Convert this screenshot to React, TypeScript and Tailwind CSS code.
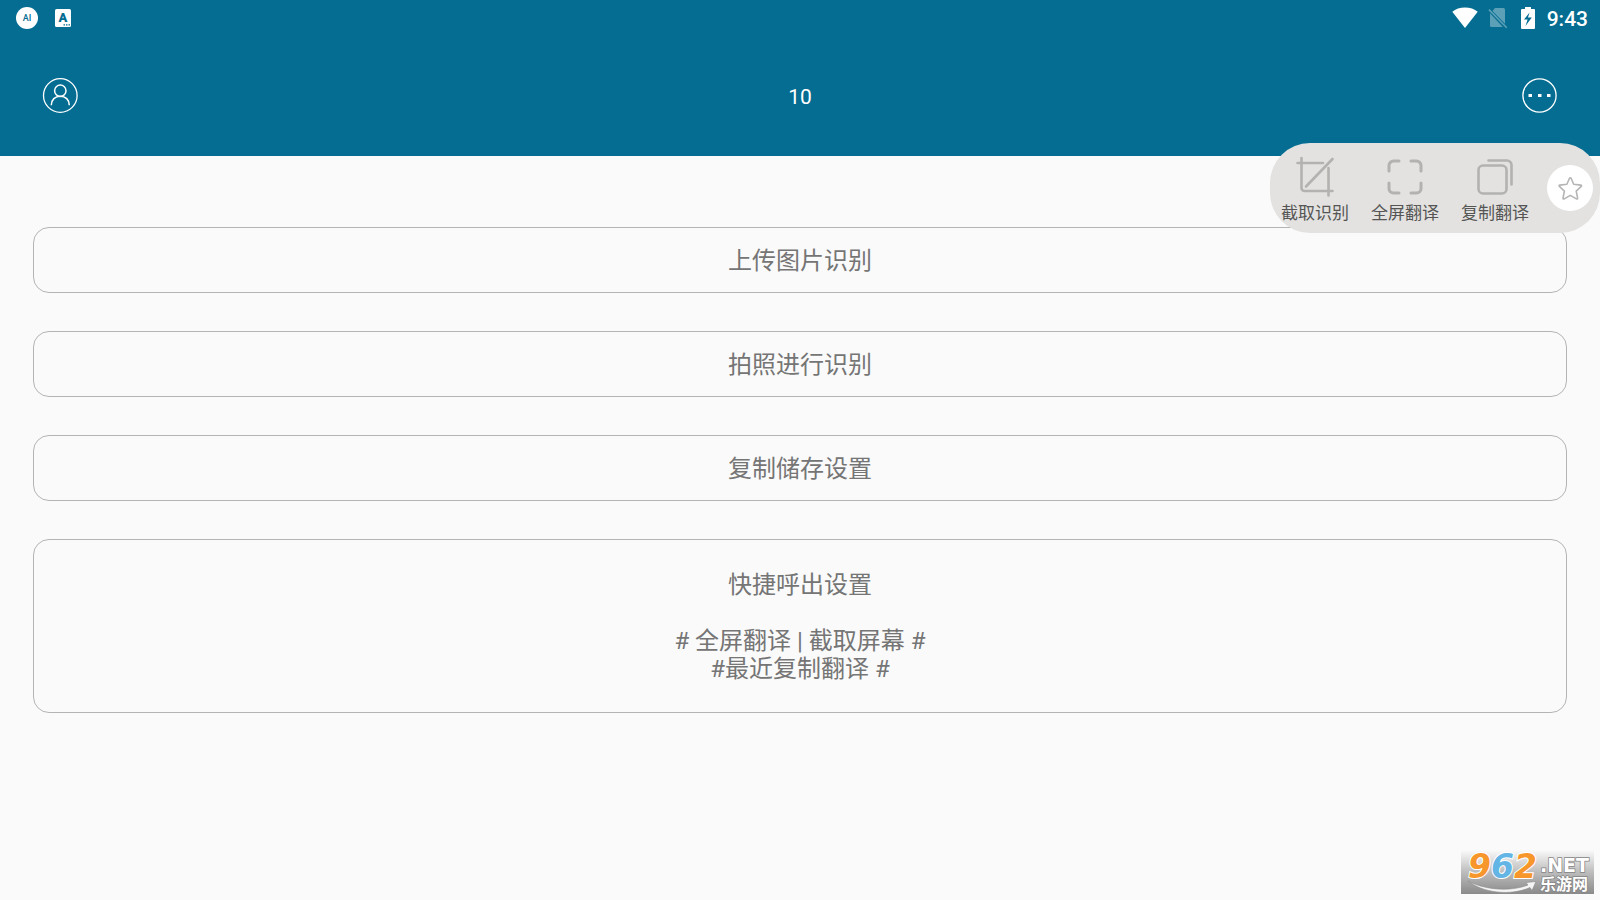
import React from 'react';

const menuButtons = [
  { id: 'upload', label: '上传图片识别' },
  { id: 'photo', label: '拍照进行识别' },
  { id: 'storage', label: '复制储存设置' },
];

const floatingTools = [
  { id: 'crop', label: '截取识别', icon: CropIcon },
  { id: 'fullscreen', label: '全屏翻译', icon: FullscreenIcon },
  { id: 'copy', label: '复制翻译', icon: CopyIcon },
];

export default function App() {
  return (
    <div className="relative min-h-screen bg-[#fafafa] font-[Roboto,'Noto_Sans_CJK_SC',sans-serif] text-[#757575]">
      <header className="bg-[#056d92] text-white">
        <StatusBar />
        <div className="grid h-[120px] grid-cols-[1fr_auto_1fr] items-center px-[42px]">
          <button className="justify-self-start" aria-label="Account">
            <UserIcon />
          </button>
          <h1 className="pt-0.5 text-[21px] leading-6">10</h1>
          <button className="justify-self-end" aria-label="More">
            <MoreIcon />
          </button>
        </div>
      </header>

      <main className="flex flex-col gap-[38px] px-[33px] pt-[71px]">
        {menuButtons.map((b) => (
          <button
            key={b.id}
            className="h-[66px] w-full rounded-2xl border border-[#b4b4b4] pt-0.5 text-2xl leading-7"
          >
            {b.label}
          </button>
        ))}
        <button className="w-full rounded-2xl border border-[#b4b4b4] pt-[31px] pb-[29px] text-2xl leading-7">
          <span className="mb-7 block">快捷呼出设置</span>
          <span className="block"># 全屏翻译 | 截取屏幕 #</span>
          <span className="block">#最近复制翻译 #</span>
        </button>
      </main>

      {/* Floating tools */}
      <div className="absolute top-[143px] right-0 flex h-[90px] rounded-[40px] bg-[#e3e2e0]">
        {floatingTools.map((t) => {
          const Icon = t.icon;
          return (
            <button key={t.id} className="flex w-[90px] flex-col items-center pt-3 text-[#555]">
              <Icon />
              <span className="mt-1.5 text-[17px] leading-5">{t.label}</span>
            </button>
          );
        })}
        <div className="flex w-[60px] items-center justify-center">
          <button
            className="flex h-[46px] w-[46px] items-center justify-center rounded-full bg-white"
            aria-label="Favorite"
          >
            <StarIcon />
          </button>
        </div>
      </div>

      <Watermark />
    </div>
  );
}

function StatusBar() {
  return (
    <div className="flex h-9 items-center justify-between pr-3 pl-4">
      <div className="flex items-center gap-4">
        <svg width="22" height="22" viewBox="0 0 22 22">
          <circle cx="11" cy="11" r="11" fill="#fff" />
          <text x="11" y="14" textAnchor="middle" fontSize="9" fill="#056d92" className="font-[Roboto] font-medium">
            AI
          </text>
        </svg>
        <svg width="18" height="18" viewBox="0 0 18 18">
          <rect x="1" width="16" height="18" rx="1.5" fill="#fff" />
          <text x="9" y="13" textAnchor="middle" fontSize="13" fill="#056d92" className="font-[Roboto] font-black">
            A
          </text>
          <path d="M9.500 15.800h1.500M12 15.800h1.500M14.500 15.800h1.500" stroke="#056d92" strokeWidth="1.200" />
        </svg>
      </div>
      <div className="flex items-center">
        <svg width="26" height="22" viewBox="0 0 26 22">
          <path d="M13 21 0.300 4.700C3.500 2.100 8 .5 13 .5s9.500 1.600 12.700 4.200z" fill="#fff" />
        </svg>
        <svg className="ml-2.5" width="20" height="22" viewBox="0 0 20 22" opacity="0.35" fill="#fff">
          <path d="M7 1h8.500A1.500 1.500 0 0 1 17 2.500v14.300L4.500 4z" />
          <path d="M2 6.300 14.800 20H3.500A1.500 1.500 0 0 1 2 18.500z" />
          <path d="M.4 3.200 1.500 2.100 19.300 20.200 18.200 21.300z" />
        </svg>
        <svg className="ml-3" width="16" height="22" viewBox="0 0 16 22">
          <path d="M5 0h6v2h3a1 1 0 0 1 1 1v18a1 1 0 0 1-1 1H2a1 1 0 0 1-1-1V3a1 1 0 0 1 1-1h3z" fill="#fff" />
          <path d="M9.500 5.500 4 12.500h3.600L5.500 19l6.300-8.500H8z" fill="#056d92" />
        </svg>
        <span className="ml-[11px] pt-px text-[21px] leading-6 font-medium">9:43</span>
      </div>
    </div>
  );
}

function UserIcon() {
  return (
    <svg width="36" height="36" viewBox="0 0 36 36" fill="none" stroke="#fff" strokeWidth="1.500">
      <circle cx="18.300" cy="17.500" r="16.800" strokeWidth="1.300" />
      <circle cx="18.300" cy="12.700" r="5.700" />
      <path d="M9.300 27.200c0-5.500 3.800-9 9-9s9 3.500 9 9" />
    </svg>
  );
}

function MoreIcon() {
  return (
    <svg width="36" height="36" viewBox="0 0 36 36" fill="none" stroke="#fff">
      <circle cx="17.500" cy="17.500" r="16.600" strokeWidth="1.300" />
      <path d="M6.500 17.500h3.500M16 17.500h3.500M25 17.500h3.500" strokeWidth="3" />
    </svg>
  );
}

function CropIcon() {
  return (
    <svg width="40" height="42" viewBox="0 0 40 42" fill="none" stroke="#b3b2b0" strokeWidth="2.600" strokeLinecap="round">
      <path d="M2.500 8H28M6.500 3v30a3 3 0 0 0 3 3H37.500" />
      <path d="M33.500 13V40.500M37.500 4 11 31.500" />
    </svg>
  );
}

function FullscreenIcon() {
  return (
    <svg width="40" height="42" viewBox="0 0 40 42" fill="none" stroke="#b3b2b0" strokeWidth="3" strokeLinecap="round">
      <path d="M4 16V10.500A4.500 4.500 0 0 1 8.500 6H14M26 6h5.500A4.500 4.500 0 0 1 36 10.500V16" />
      <path d="M36 28v5.500a4.500 4.500 0 0 1-4.500 4.500H26M14 38H8.500A4.500 4.500 0 0 1 4 33.500V28" />
    </svg>
  );
}

function CopyIcon() {
  return (
    <svg width="40" height="42" viewBox="0 0 40 42" fill="none" stroke="#b3b2b0" strokeWidth="2.600" strokeLinecap="round">
      <rect x="3.500" y="10.500" width="28" height="28" rx="4.500" />
      <path d="M13.500 5.500H32a4.500 4.500 0 0 1 4.500 4.500V29.500" />
    </svg>
  );
}

function StarIcon() {
  return (
    <svg width="28" height="28" viewBox="0 0 28 28" fill="none" stroke="#b5b5b5" strokeWidth="1.600" strokeLinejoin="round">
      <path d="M14.300 3.700q.5 0 .8.600l2.600 6 7 .8q1.400.3.500 1.300l-5 4.700 1.400 6.900q.1 1.400-1.200.9L14.300 21.400l-6.100 3.500q-1.300.5-1.200-.9l1.400-6.900-5-4.700q-.9-1 .5-1.300l7-.8 2.600-6q.3-.6.8-.6z" />
    </svg>
  );
}

function Watermark() {
  return (
    <svg className="absolute right-1.5 bottom-1.5 overflow-visible" width="133" height="44" viewBox="0 0 133 44">
      <defs>
        <linearGradient id="wm-bg" x1="0" y1="0" x2="0" y2="1">
          <stop offset="0" stopColor="#fafafa" />
          <stop offset="0.5" stopColor="#bdbdbd" />
          <stop offset="1" stopColor="#8a8a8a" />
        </linearGradient>
      </defs>
      <rect width="133" height="44" fill="url(#wm-bg)" />
      <path d="M7 31c17 9 42 11 60 4l-2-2.500 10-1-4 9-2-3c-20 9-48 5-62-6.500z" fill="#f5f5f5" stroke="#8a8a8a" strokeWidth="0.600" />
      <text
        x="7"
        y="28"
        className="font-['DejaVu_Sans'] font-bold italic"
        fontSize="33"
        stroke="#fff"
        strokeWidth="2"
        paintOrder="stroke"
      >
        <tspan fill="#f7962a">9</tspan>
        <tspan fill="#62b5e5">6</tspan>
        <tspan fill="#f7962a">2</tspan>
      </text>
      <g fill="#fff" stroke="#858585" strokeWidth="1.500" paintOrder="stroke">
        <text x="79" y="22" fontSize="19" className="font-['DejaVu_Sans'] font-bold">
          .NET
        </text>
        <text x="79" y="40" fontSize="16" className="font-['Noto_Sans_CJK_SC',sans-serif] font-bold">
          乐游网
        </text>
      </g>
    </svg>
  );
}
